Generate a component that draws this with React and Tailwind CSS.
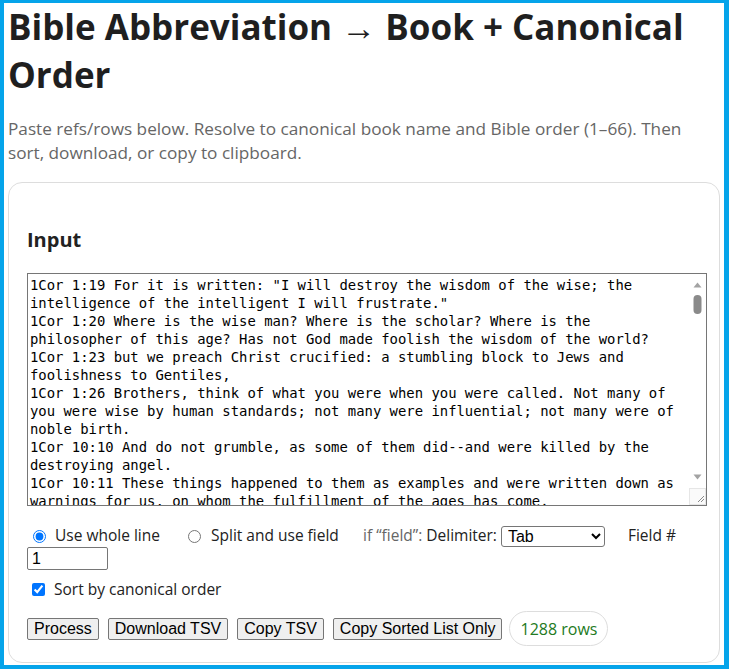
import { useState } from 'react';

const VISIBLE_ROWS = [
  '1Cor 1:19 For it is written: "I will destroy the wisdom of the wise; the intelligence of the intelligent I will frustrate."',
  '1Cor 1:20 Where is the wise man? Where is the scholar? Where is the philosopher of this age? Has not God made foolish the wisdom of the world?',
  '1Cor 1:23 but we preach Christ crucified: a stumbling block to Jews and foolishness to Gentiles,',
  '1Cor 1:26 Brothers, think of what you were when you were called. Not many of you were wise by human standards; not many were influential; not many were of noble birth.',
  '1Cor 10:10 And do not grumble, as some of them did--and were killed by the destroying angel.',
  '1Cor 10:11 These things happened to them as examples and were written down as warnings for us, on whom the fulfillment of the ages has come.',
  '1Cor 10:12 So, if you think you are standing firm, be careful that you don\'t fall!',
  '1Cor 10:13 No temptation has seized you except what is common to man. And God is faithful; he will not let you be tempted beyond what you can bear.',
  '1Cor 10:31 So whether you eat or drink or whatever you do, do it all for the glory of God.',
  '1Cor 11:1 Follow my example, as I follow the example of Christ.',
  '1Cor 12:4 There are different kinds of gifts, but the same Spirit.',
  '1Cor 12:12 The body is a unit, though it is made up of many parts; and though all its parts are many, they form one body. So it is with Christ.',
  '1Cor 13:4 Love is patient, love is kind. It does not envy, it does not boast, it is not proud.',
  '1Cor 13:13 And now these three remain: faith, hope and love. But the greatest of these is love.',
];

const SAMPLE = Array.from({ length: 12 }, () => VISIBLE_ROWS).flat().join('\n');

const Btn = ({ children }) => (
  <button className="bg-[#efefef] border border-[#767676] rounded-[2px] px-[6px] py-px text-[16px] leading-[18px] text-black font-['Liberation_Sans',Arial,sans-serif] hover:bg-[#e5e5e5]">
    {children}
  </button>
);

// classic scrollbar look, drawn over the textarea's right edge
const FakeScrollbar = () => (
  <div className="absolute top-px right-px bottom-px w-[17px] bg-white pointer-events-none">
    <svg width="17" height="231" viewBox="0 0 17 231" className="block">
      <path d="M4.5 13.5 L8.5 8.5 L12.5 13.5 Z" fill="#a3a3a3" />
      <rect x="4.5" y="21" width="8" height="19" rx="4" fill="#8a8a8a" />
      <path d="M4.5 200.5 L12.5 200.5 L8.5 205.5 Z" fill="#a3a3a3" />
      <rect x="0.5" y="214.5" width="16" height="16" fill="#fafafa" stroke="#e6e6e6" />
      <path d="M9 228 L15 222 M12 228 L15 225" stroke="#8a8a8a" strokeWidth="1" />
    </svg>
  </div>
);

export default function App() {
  const [text, setText] = useState(SAMPLE);
  const [mode, setMode] = useState('line');
  const [sorted, setSorted] = useState(true);

  return (
    <div className="relative w-full h-[669px] overflow-hidden bg-white text-[#222] font-['Open_Sans',sans-serif]">
      <div className="px-2">
        <h1 className="pt-[3px] text-[35px] leading-[48px] font-bold text-[#1f1f1f] w-[700px]">
          Bible Abbreviation → Book + Canonical Order
        </h1>
        <p className="mt-[18px] text-[17.2px] leading-[24px] text-[#666] w-[700px]">
          Paste refs/rows below. Resolve to canonical book name and Bible order (1–66). Then sort, download, or copy to clipboard.
        </p>

        <div className="mt-[17px] w-[712px] h-[481px] border border-[#dddddd] rounded-[14px] pl-[18px] pt-[43px]">
          <h2 className="text-[20px] leading-[28px] font-bold text-[#222]">Input</h2>

          <div className="relative mt-[19px] w-[680px] h-[233px]">
            <textarea
              value={text}
              onChange={(e) => setText(e.target.value)}
              spellCheck={false}
              className="block w-[680px] h-[233px] border border-[#767676] pl-[2px] pt-[2px] pb-[2px] pr-[19px] text-[13.9px] leading-[18px] text-black font-['DejaVu_Sans_Mono',monospace] resize-none overflow-hidden"
            />
            <FakeScrollbar />
          </div>

          <div className="mt-[19px] h-[22px] flex items-center text-[15.5px] whitespace-nowrap">
            <label className="flex items-center cursor-pointer">
              <input
                type="radio"
                name="mode"
                checked={mode === 'line'}
                onChange={() => setMode('line')}
                className="m-0 ml-[6px] w-[13px] h-[13px]"
              />
              <span className="ml-[9px] w-[104px]">Use whole line</span>
            </label>
            <label className="ml-[29px] flex items-center cursor-pointer">
              <input
                type="radio"
                name="mode"
                checked={mode === 'field'}
                onChange={() => setMode('field')}
                className="m-0 w-[13px] h-[13px]"
              />
              <span className="ml-[10px] w-[128px]">Split and use field</span>
            </label>
            <span className="ml-[24px] text-[#666]">if “field”:</span>
            <span className="ml-[4px]">Delimiter:</span>
            <select className="ml-[4px] w-[104px] h-[21px] border border-[#767676] rounded-[3px] pl-[2px] text-[16px] text-black font-['Liberation_Sans',Arial,sans-serif]">
              <option>Tab</option>
              <option>Comma</option>
              <option>Pipe</option>
              <option>Semicolon</option>
            </select>
            <span className="ml-[23px]">Field #</span>
          </div>

          <input
            type="number"
            defaultValue={1}
            className="block w-[81px] h-[23px] border border-[#767676] rounded-[2px] px-[4px] text-[16px] text-black font-['Liberation_Sans',Arial,sans-serif]"
          />

          <label className="mt-[8px] h-[23px] flex items-center text-[15.5px] cursor-pointer">
            <input
              type="checkbox"
              checked={sorted}
              onChange={(e) => setSorted(e.target.checked)}
              className="m-0 ml-[5px] w-[13px] h-[13px]"
            />
            <span className="ml-[9px]">Sort by canonical order</span>
          </label>

          <div className="mt-[10px] flex items-center gap-[9px]">
            <Btn>Process</Btn>
            <Btn>Download TSV</Btn>
            <Btn>Copy TSV</Btn>
            <Btn>Copy Sorted List Only</Btn>
            <span className="-ml-[2px] h-[35px] px-[10px] flex items-center border border-[#dddddd] rounded-full text-[16px] text-[#237a23]">
              1288 rows
            </span>
          </div>
        </div>
      </div>

      {/* selection frame around the page */}
      <div className="absolute top-0 left-0 w-[729px] h-[669px] border-l-4 border-t-[3px] border-r-[5px] border-b-4 border-[#05a4ea] pointer-events-none" />
    </div>
  );
}
